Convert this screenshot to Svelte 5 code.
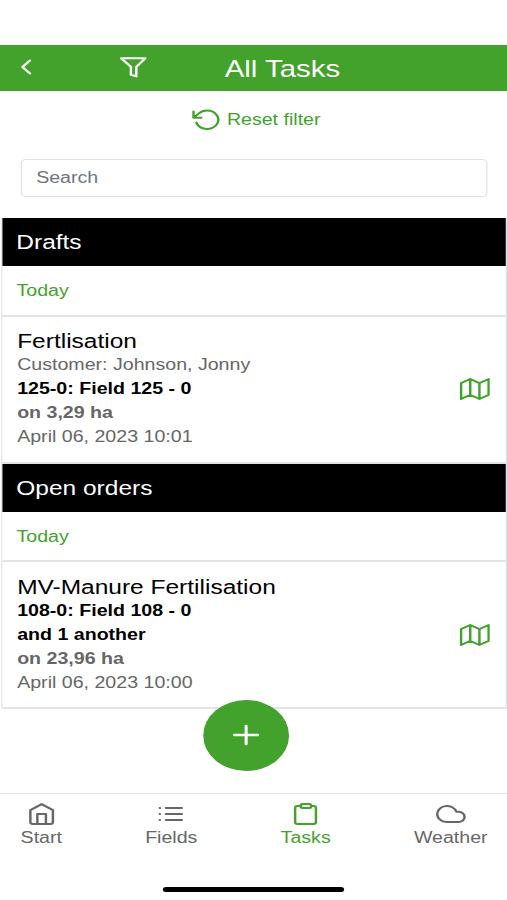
<script lang="ts">
	interface Task {
		title: string;
		customer?: string;
		fields: string[];
		area: string;
		date: string;
	}

	interface Group {
		name: string;
		day: string;
		tasks: Task[];
	}

	const groups: Group[] = [
		{
			name: 'Drafts',
			day: 'Today',
			tasks: [
				{
					title: 'Fertlisation',
					customer: 'Johnson, Jonny',
					fields: ['125-0: Field 125 - 0'],
					area: '3,29 ha',
					date: 'April 06, 2023 10:01',
				},
			],
		},
		{
			name: 'Open orders',
			day: 'Today',
			tasks: [
				{
					title: 'MV-Manure Fertilisation',
					fields: ['108-0: Field 108 - 0', 'and 1 another'],
					area: '23,96 ha',
					date: 'April 06, 2023 10:00',
				},
			],
		},
	];

	const tabs = ['Start', 'Fields', 'Tasks', 'Weather'];

	let active = $state('Tasks');
	let search = $state('');
</script>

<div class="app">
	<header>
		<button class="back" aria-label="Back">
			<svg width="9" height="16" viewBox="0 0 9 16"><path d="M7.5 1.5 1.3 8l6.2 6.5" /></svg>
		</button>
		<button class="filter" aria-label="Filter">
			<svg width="22" height="21" viewBox="0 0 22 21">
				<path d="M1 1.3h19.6l-7.3 8.6v9.5l-4.4-1.7V9.9z" />
			</svg>
		</button>
		<h1>All Tasks</h1>
	</header>

	<button class="reset">
		<svg width="24" height="24" viewBox="0 0 24 24">
			<path d="M2 3.4v6.4h6.4M4.3 14.6a9.2 9.2 0 1 0 1.9-9L2 9.8" />
		</svg>
		<span>Reset filter</span>
	</button>

	<input type="text" placeholder="Search" bind:value={search} />

	<main>
		{#each groups as group (group.name)}
			<section>
				<h2>{group.name}</h2>
				<div class="day">{group.day}</div>
				{#each group.tasks as task (task.title)}
					<article>
						<div class="details">
							<h3>{task.title}</h3>
							{#if task.customer}
								<p>Customer: {task.customer}</p>
							{/if}
							{#each task.fields as field (field)}
								<p class="field">{field}</p>
							{/each}
							<p class="area">on {task.area}</p>
							<p>{task.date}</p>
						</div>
						<svg class="map" width="25" height="24" viewBox="0 0 25 24">
							<path d="M1.5 6.2 9 2l7.5 4.2L24 2v15.8L16.5 22 9 17.8 1.5 22zM9 2v15.8M16.5 6.2V22" />
						</svg>
					</article>
				{/each}
			</section>
		{/each}
	</main>

	<button class="add" aria-label="Add task">
		<svg width="22" height="22" viewBox="0 0 22 22"><path d="M11 2v18M1.5 11h19" /></svg>
	</button>

	<nav>
		{#each tabs as tab (tab)}
			<button class:active={active === tab} onclick={() => (active = tab)}>
				<svg width="26" height="24" viewBox="0 0 26 24">
					{#if tab === 'Start'}
						<path d="M3.8 8.2 13 2.2l9.2 6V20q0 2-2 2H5.8q-2 0-2-2zM9.5 22V12h7v10" />
					{:else if tab === 'Fields'}
						<path d="M8.5 6h13M8.500 12h13M8.500 18h13M3.500 6h.1M3.500 12h.1M3.500 18h.1" />
					{:else if tab === 'Tasks'}
						<path d="M9 4H6a2 2 0 0 0-2 2v14a2 2 0 0 0 2 2h13a2 2 0 0 0 2-2V6a2 2 0 0 0-2-2h-2" />
						<rect x="8.500" y="2" width="8.500" height="4" rx="1.500" />
					{:else}
						<path d="M9.500 20a8 8 0 1 1 8.200-10.200h1.600a5.100 5.100 0 0 1 0 10.200z" />
					{/if}
				</svg>
				<span>{tab}</span>
			</button>
		{/each}
	</nav>
	<div class="home-bar"></div>
</div>

<style>
	:global(body) {
		margin: 0;
		background: #fff;
		overflow: hidden;
	}

	/* 414px layout, widened to fill the viewport */
	.app {
		position: relative;
		display: flex;
		flex-direction: column;
		box-sizing: border-box;
		width: 414px;
		height: 900px;
		padding-top: 44.5px;
		transform: scaleX(1.2246);
		transform-origin: 0 0;
		font-family: 'Liberation Sans', Arial, sans-serif;
		font-size: 16px;
		line-height: 24px;
		color: #666;
	}

	button {
		padding: 0;
		border: 0;
		background: none;
		font: inherit;
		color: inherit;
	}

	svg {
		display: block;
		flex: none;
		fill: none;
		stroke: currentColor;
		stroke-width: 2;
		stroke-linecap: round;
		stroke-linejoin: round;
	}

	h1,
	h2,
	h3,
	p {
		margin: 0;
		font-weight: 400;
	}

	header {
		display: grid;
		grid-template-columns: 81px 86px 1fr;
		align-items: center;
		flex: none;
		box-sizing: border-box;
		height: 46.5px;
		padding-left: 16.5px;
		background: #43a22c;
		color: #fff;
	}

	header svg {
		margin-top: -1px;
	}

	h1 {
		padding-top: 2px;
		font-size: 24px;
		line-height: 44px;
	}

	.reset {
		display: flex;
		align-items: center;
		align-self: center;
		gap: 5px;
		margin-top: 16.5px;
		margin-left: 4px;
		color: #43a22c;
	}

	input {
		flex: none;
		box-sizing: border-box;
		height: 38px;
		margin: 27px 16px 22px 16.5px;
		padding: 0 12px;
		border: 1px solid #dee2e6;
		border-radius: 4px;
		font: inherit;
		color: #222;
		outline: none;
	}

	input::placeholder {
		color: #6c757d;
		opacity: 1;
	}

	main {
		margin: -0.5px 0.5px 0;
		border: solid #dfe2e5;
		border-width: 0 1px;
	}

	h2 {
		height: 48px;
		padding-left: 11.8px;
		background: #000;
		color: #fff;
		font-size: 20px;
		line-height: 48px;
	}

	.day {
		box-sizing: border-box;
		height: 50.5px;
		padding-left: 12px;
		border-bottom: 2px solid #e2e5e8;
		line-height: 49px;
		color: #43a22c;
	}

	article {
		display: flex;
		align-items: center;
		justify-content: space-between;
		box-sizing: border-box;
		height: 147px;
		padding: 0 12.5px;
		border-bottom: 2px solid #e2e5e8;
	}

	h3 {
		font-size: 20px;
		line-height: 24px;
		color: #000;
	}

	.field,
	.area {
		font-weight: 700;
	}

	.field {
		color: #000;
	}

	.map {
		color: #43a22c;
	}

	.add {
		position: absolute;
		top: 700px;
		left: 166px;
		display: flex;
		align-items: center;
		justify-content: center;
		width: 70px;
		height: 70.5px;
		border-radius: 50%;
		background: #43a22c;
		color: #fff;
	}

	.add svg {
		stroke-width: 2.5;
	}

	nav {
		display: flex;
		justify-content: space-between;
		align-items: flex-start;
		box-sizing: border-box;
		height: 94.5px;
		margin-top: auto;
		padding: 8.5px 15.8px 0 16.8px;
		border-top: 1px solid #e4e4e4;
	}

	nav button {
		display: flex;
		flex-direction: column;
		align-items: center;
	}

	nav .active {
		color: #43a22c;
	}

	.home-bar {
		flex: none;
		align-self: center;
		width: 148px;
		height: 5px;
		margin-bottom: 8px;
		border-radius: 3px;
		background: #000;
	}
</style>
